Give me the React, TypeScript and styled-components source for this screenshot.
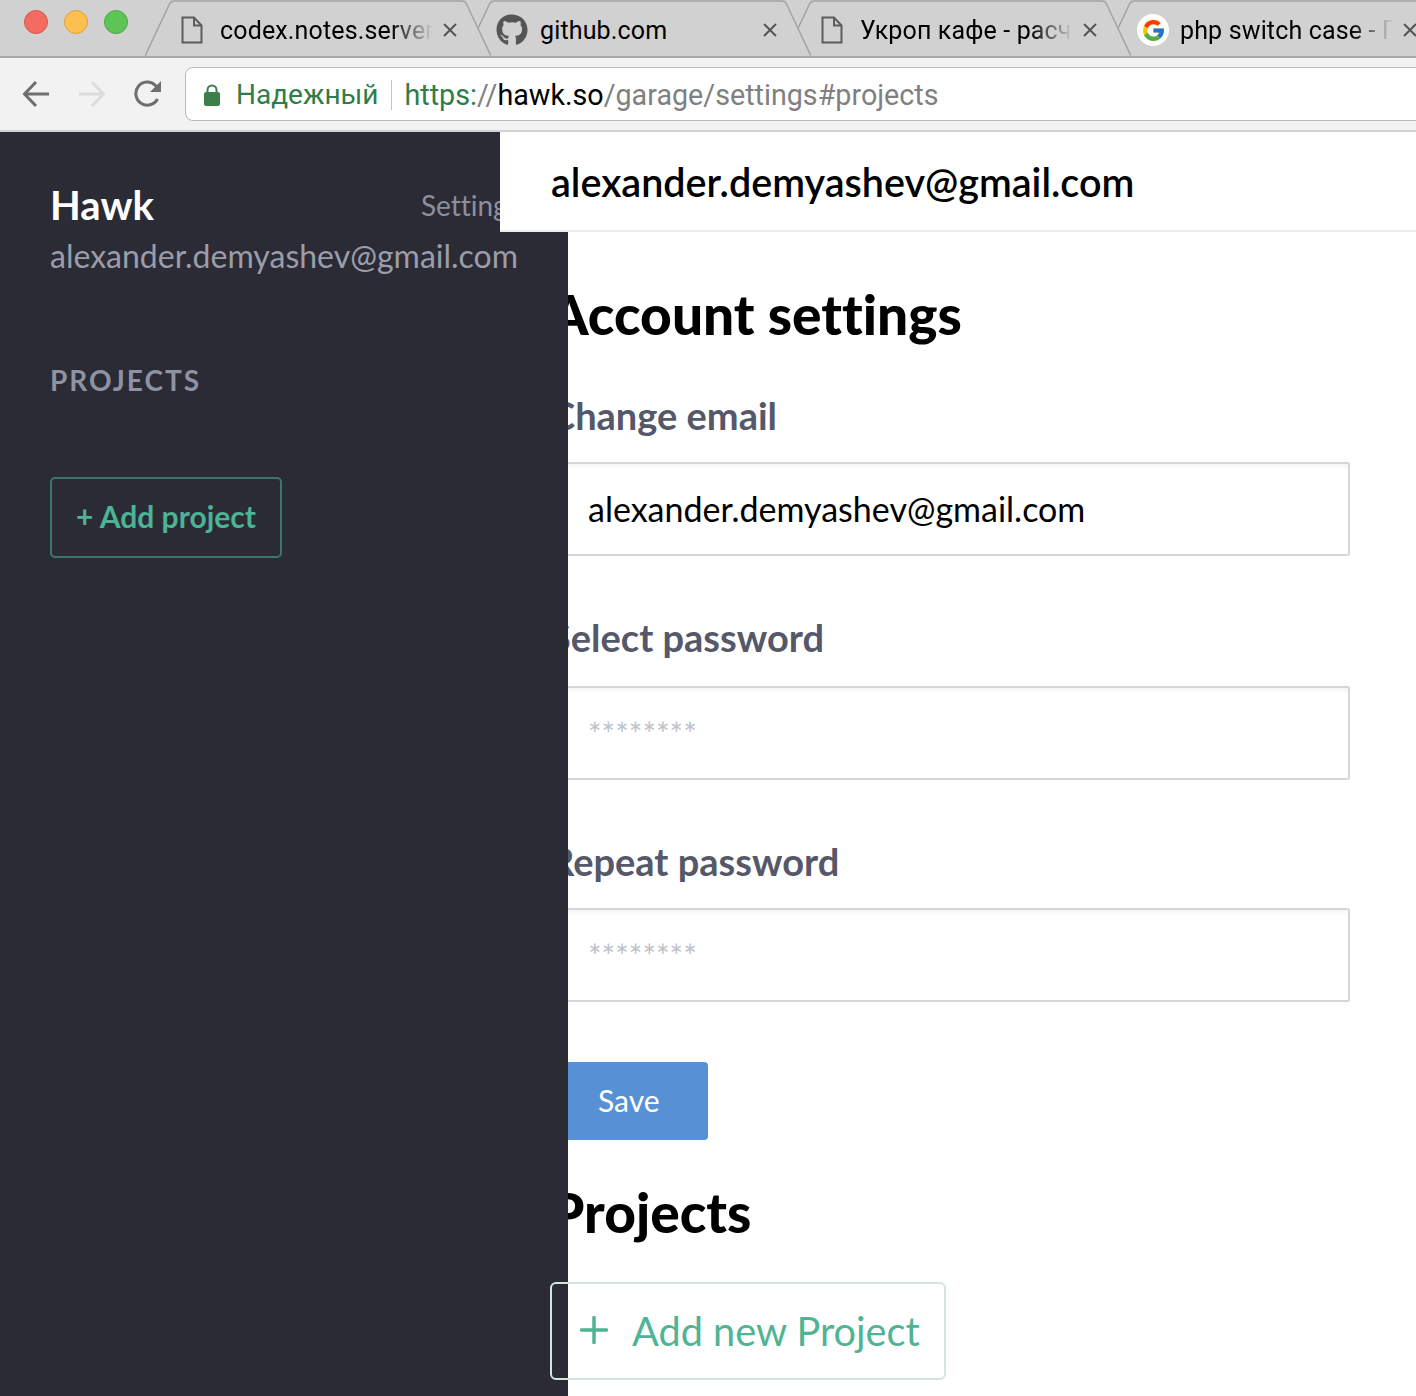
import styled, { createGlobalStyle } from "styled-components";
import { FaGithub } from "react-icons/fa";
import { FcGoogle } from "react-icons/fc";

const GlobalStyle = createGlobalStyle`
  html, body {
    margin: 0;
    height: 100%;
    overflow: hidden;
    background: #fff;
  }
  * {
    box-sizing: border-box;
  }
`;

const Window = styled.div`
  display: flex;
  flex-direction: column;
  height: 1396px;
  overflow: hidden;
  font-family: Lato, "Liberation Sans", sans-serif;
  font-variant-ligatures: none;
`;

/* browser chrome */
const TabStrip = styled.div`
  display: flex;
  flex: 0 0 58px;
  align-items: stretch;
  border-bottom: 2px solid #a9a9a9;
  background: #d1d1d1;
  overflow: hidden;
`;

const TrafficLights = styled.div`
  display: flex;
  flex: 0 0 145px;
  gap: 16px;
  padding: 10px 0 0 24px;
`;

const Light = styled.span<{ $fill: string; $edge: string }>`
  width: 24px;
  height: 24px;
  border-radius: 50%;
  background: ${(p) => p.$fill};
  border: 1px solid ${(p) => p.$edge};
`;

const Tab = styled.div<{ $z: number }>`
  position: relative;
  z-index: ${(p) => p.$z};
  display: flex;
  flex: 0 0 346px;
  align-items: center;
  height: 56px;
  margin-right: -26px;
  padding: 4px 0 0 36px;
`;

const TabShape = styled.svg`
  position: absolute;
  top: 0;
  left: 0;
  z-index: -1;
`;

const TabIcon = styled.span`
  display: flex;
  flex: 0 0 39px;
  align-items: center;
  color: #555;
`;

const GithubMark = styled(FaGithub)`
  flex: none;
  margin-left: -5px;
  color: #555;
`;

const GoogleBadge = styled.span`
  display: flex;
  flex: none;
  align-items: center;
  justify-content: center;
  width: 32px;
  height: 32px;
  margin-left: -4px;
  background: #fff;
  border-radius: 50%;
`;

const TabTitle = styled.span<{ $fade: boolean }>`
  flex: 0 0 213px;
  overflow: hidden;
  white-space: nowrap;
  font-family: Roboto, "Liberation Sans", sans-serif;
  font-size: 25px;
  letter-spacing: 0.15px;
  color: #000;
  mask-image: ${(p) =>
    p.$fade ? "linear-gradient(to right, #000 80%, transparent 100%)" : "none"};
`;

const TabClose = styled.svg`
  flex: 0 0 14px;
  margin-left: 10px;
`;

const Toolbar = styled.div`
  display: flex;
  flex: 0 0 74px;
  align-items: center;
  padding: 0 0 0 22px;
  background: #f2f2f2;
  border-bottom: 2px solid #d2d2d2;
`;

const NavIcon = styled.svg`
  flex: 0 0 auto;
  margin-right: 28px;
`;

const AddressBar = styled.div`
  display: flex;
  flex: 1;
  align-items: center;
  height: 54px;
  margin-left: -5px;
  margin-right: -10px;
  padding: 1px 0 0 18px;
  background: #fff;
  border: 1px solid #b9b9b9;
  border-radius: 8px;
  font-family: Roboto, "Liberation Sans", sans-serif;
  font-size: 28.700px;
  white-space: nowrap;
`;

const Secure = styled.span`
  margin-left: 16px;
  font-size: 28px;
  color: #2f7d48;
`;

const AddressDivider = styled.span`
  width: 1px;
  height: 30px;
  margin: 0 12px 0 13px;
  background: #c4c4c4;
`;

const UrlPart = styled.span<{ $color: string }>`
  color: ${(p) => p.$color};
`;

/* page */
const Page = styled.div`
  display: flex;
  flex: 1;
  min-height: 0;
`;

const Sidebar = styled.aside`
  position: relative;
  z-index: 2;
  flex: 0 0 568px;
  margin-right: -68px;
  padding: 47px 0 0 50px;
  background: #2b2b36;
`;

const BrandRow = styled.div`
  display: flex;
  align-items: center;
  gap: 267px;
  white-space: nowrap;
`;

const Brand = styled.div`
  font-size: 40px;
  font-weight: 700;
  line-height: 52px;
  color: #fff;
`;

const SettingsLink = styled.span`
  font-size: 28px;
  color: #8d8f9d;
`;

const SideEmail = styled.div`
  margin-top: 2px;
  font-size: 32px;
  line-height: 46px;
  white-space: nowrap;
  color: #9b9da9;
`;

const SideHeading = styled.div`
  margin-top: 83px;
  font-size: 28px;
  font-weight: 700;
  line-height: 36px;
  letter-spacing: 2px;
  color: #8e92a3;
`;

const AddProjectButton = styled.button`
  display: block;
  width: 232px;
  height: 81px;
  margin-top: 79px;
  padding: 0 0 3px;
  background: transparent;
  border: 2px solid #3d7568;
  border-radius: 5px;
  font-family: inherit;
  font-size: 30px;
  font-weight: 700;
  color: #4cb394;
`;

const Main = styled.main`
  flex: 1;
  min-width: 0;
`;

const TopBar = styled.header`
  position: relative;
  z-index: 3;
  height: 100px;
  padding: 0 0 0 51px;
  background: #fff;
  border-bottom: 2px solid #ececec;
  font-size: 39.500px;
  font-weight: 600;
  line-height: 100px;
  color: #000;
`;

const Content = styled.div`
  padding: 0 66px 0 50px;
`;

const PageTitle = styled.h1<{ $top: number }>`
  margin: ${(p) => p.$top}px 0 0;
  font-size: 55px;
  font-weight: 900;
  line-height: 68px;
  color: #000;
`;

const FieldLabel = styled.label<{ $top: number; $gap: number }>`
  display: block;
  margin-top: ${(p) => p.$top}px;
  margin-bottom: ${(p) => p.$gap}px;
  font-size: 38px;
  font-weight: 700;
  line-height: 44px;
  color: #555869;
`;

const Field = styled.input`
  display: block;
  width: 100%;
  height: 94px;
  padding: 0 0 2px 36px;
  background: #fff;
  border: 2px solid #d6d6d9;
  border-radius: 3px;
  box-shadow: inset 0 4px 4px -2px rgba(0, 0, 0, 0.05);
  outline: none;
  font-family: inherit;
  font-size: 34px;
  color: #000;

  &::placeholder {
    font-size: 32px;
    color: #bfc1c9;
    opacity: 1;
  }
`;

const SaveButton = styled.button`
  display: block;
  width: 158px;
  height: 78px;
  margin-top: 60px;
  padding: 0 0 2px 48px;
  background: #5691d5;
  border: 0;
  border-radius: 4px;
  font-family: inherit;
  font-size: 30px;
  text-align: left;
  color: #fff;
`;

const AddNewProject = styled.button`
  position: relative;
  z-index: 3;
  display: flex;
  align-items: center;
  gap: 24px;
  width: 396px;
  height: 98px;
  margin-top: 36px;
  padding: 0 0 2px 28px;
  background: transparent;
  border: 2px solid #d0e6df;
  border-radius: 6px;
  font-family: inherit;
  font-size: 39.700px;
  color: #4fb394;
  white-space: nowrap;
`;

const FileIcon = () => (
  <svg width="22" height="28" viewBox="0 0 22 28" fill="none" stroke="#5c5c5c" strokeWidth="2">
    <path d="M1.500 1.500h11.500l7.500 8v17h-19z" />
    <path d="M13 1.500v8h7.500" />
  </svg>
);

const CloseIcon = () => (
  <TabClose width="14" height="14" viewBox="0 0 14 14" stroke="#555" strokeWidth="2">
    <path d="M1 1l12 12M13 1L1 13" />
  </TabClose>
);

const tabs = [
  { title: "codex.notes.server", icon: <FileIcon />, fade: true },
  { title: "github.com", icon: <GithubMark size={32} />, fade: false },
  { title: "Укроп кафе - расчёт", icon: <FileIcon />, fade: true },
  {
    title: "php switch case - Поиск",
    icon: (
      <GoogleBadge>
        <FcGoogle size={25} />
      </GoogleBadge>
    ),
    fade: true,
  },
];

const App = () => {
  return (
    <Window>
      <GlobalStyle />
      <TabStrip>
        <TrafficLights>
          <Light $fill="#f46b62" $edge="#d9564f" />
          <Light $fill="#fbc04f" $edge="#e0a33c" />
          <Light $fill="#5cc556" $edge="#4aa946" />
        </TrafficLights>
        {tabs.map((tab, i) => (
          <Tab key={tab.title} $z={10 - i}>
            <TabShape width="346" height="56" viewBox="0 0 346 56">
              <path
                d="M0 56L24.500 4Q26 1 29 1H317Q320 1 321.500 4L346 56"
                fill="#d1d1d1"
                stroke="#a3a3a3"
                strokeWidth="1.500"
              />
            </TabShape>
            <TabIcon>{tab.icon}</TabIcon>
            <TabTitle $fade={tab.fade}>{tab.title}</TabTitle>
            <CloseIcon />
          </Tab>
        ))}
      </TabStrip>
      <Toolbar>
        <NavIcon width="28" height="28" viewBox="0 0 28 28" fill="none" stroke="#6e6e6e" strokeWidth="3">
          <path d="M27 14H3M14 2L2.500 14 14 26" />
        </NavIcon>
        <NavIcon width="28" height="28" viewBox="0 0 28 28" fill="none" stroke="#dcdcdc" strokeWidth="3">
          <path d="M1 14h24M14 2l11.500 12L14 26" />
        </NavIcon>
        <NavIcon width="28" height="28" viewBox="0 0 28 28" fill="none" stroke="#6e6e6e" strokeWidth="3">
          <path d="M23.500 19A11.500 11.500 0 1 1 21.500 5.500L25 9" />
          <path d="M27 1v11H16z" fill="#6e6e6e" stroke="none" />
        </NavIcon>
        <AddressBar>
          <svg width="16" height="22" viewBox="0 0 16 22">
            <path d="M3.500 9V6a4.500 4.500 0 0 1 9 0v3" fill="none" stroke="#3a8048" strokeWidth="2" />
            <rect x="0" y="8" width="16" height="14" rx="2" fill="#3a8048" />
          </svg>
          <Secure>Надежный</Secure>
          <AddressDivider />
          <UrlPart $color="#2f7d48">https:</UrlPart>
          <UrlPart $color="#808080">//</UrlPart>
          <UrlPart $color="#000">hawk.so</UrlPart>
          <UrlPart $color="#808080">/garage/settings#projects</UrlPart>
        </AddressBar>
      </Toolbar>
      <Page>
        <Sidebar>
          <BrandRow>
            <Brand>Hawk</Brand>
            <SettingsLink>Settings</SettingsLink>
          </BrandRow>
          <SideEmail>alexander.demyashev@gmail.com</SideEmail>
          <SideHeading>PROJECTS</SideHeading>
          <AddProjectButton>+ Add project</AddProjectButton>
        </Sidebar>
        <Main>
          <TopBar>alexander.demyashev@gmail.com</TopBar>
          <Content>
            <PageTitle $top={48}>Account settings</PageTitle>
            <FieldLabel $top={45} $gap={25}>Change email</FieldLabel>
            <Field defaultValue="alexander.demyashev@gmail.com" />
            <FieldLabel $top={59} $gap={27}>Select password</FieldLabel>
            <Field placeholder="********" />
            <FieldLabel $top={59} $gap={25}>Repeat password</FieldLabel>
            <Field placeholder="********" />
            <SaveButton>Save</SaveButton>
            <PageTitle $top={38}>Projects</PageTitle>
            <AddNewProject>
              <svg width="28" height="28" viewBox="0 0 28 28" stroke="#4fb394" strokeWidth="3.500" strokeLinecap="round">
                <path d="M14 1.500v25M1.500 14h25" />
              </svg>
              Add new Project
            </AddNewProject>
          </Content>
        </Main>
      </Page>
    </Window>
  );
};

export default App;
